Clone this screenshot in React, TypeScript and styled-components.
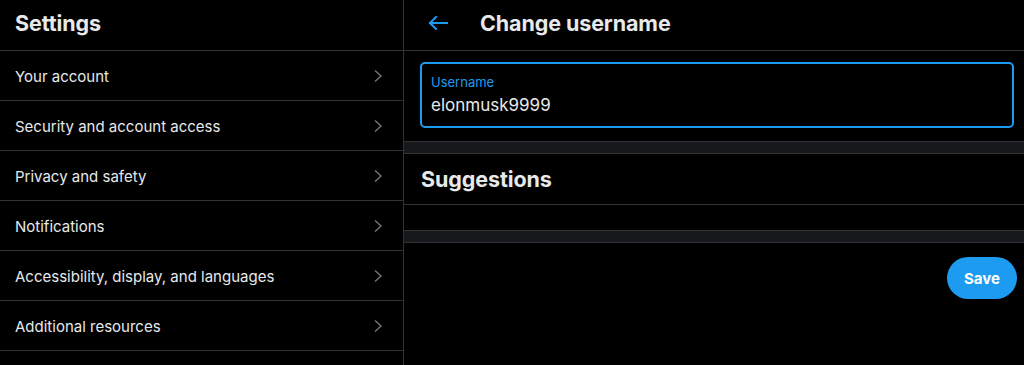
import React from "react";
import styled, { createGlobalStyle } from "styled-components";

const Global = createGlobalStyle`
  html, body { margin: 0; padding: 0; background: #000; }
  body { font-family: Inter, "Noto Sans", "Liberation Sans", sans-serif; color: #e7e9ea; }
  * { box-sizing: border-box; }
`;

const Page = styled.div`
  display: flex;
  width: 1024px;
  height: 365px;
  background: #000;
  overflow: hidden;
`;

const Sidebar = styled.nav`
  width: 404px;
  flex-shrink: 0;
  border-right: 1px solid #2f3336;
  display: flex;
  flex-direction: column;
`;

const Header = styled.div`
  height: 51px;
  border-bottom: 1px solid #2f3336;
  display: flex;
  align-items: center;
  padding: 0 15px;
  padding-bottom: 4px;
`;

const Title = styled.h1`
  margin: 0;
  font-size: 21.5px;
  font-weight: 700;
  color: #e7e9ea;
  letter-spacing: -0.1px;
`;

const Row = styled.div`
  height: 50px;
  border-bottom: 1px solid #2f3336;
  display: flex;
  align-items: center;
  justify-content: space-between;
  padding: 1px 20px 0 15px;
  font-size: 15px;
  color: #e7e9ea;
`;

const Chevron = styled.svg`
  width: 10px;
  height: 14px;
  color: #71767b;
`;

const Main = styled.main`
  flex: 1;
  display: flex;
  flex-direction: column;
`;

const BackHeader = styled(Header)`
  padding-left: 24px;
  gap: 32px;
`;

const BackArrow = styled.svg`
  width: 20px;
  height: 14px;
  color: #1d9bf0;
`;

const Field = styled.div`
  margin: 11px 10px 0 16px;
  height: 66px;
  border: 2px solid #1d9bf0;
  border-radius: 5px;
  padding: 10px 9px 0 9px;
  display: flex;
  flex-direction: column;
`;

const Label = styled.label`
  font-size: 13px;
  color: #1d9bf0;
  line-height: 16px;
`;

const Value = styled.div`
  font-size: 17px;
  line-height: 24px;
  margin-top: 3px;
  color: #e7e9ea;
`;

const Band = styled.div<{ $top: number }>`
  margin-top: ${(p) => p.$top}px;
  height: 13px;
  background: #16181c;
  border-top: 1px solid #2f3336;
  border-bottom: 1px solid #2f3336;
`;

const Section = styled.div`
  height: 51px;
  border-bottom: 1px solid #2f3336;
  display: flex;
  align-items: center;
  padding: 0 17px;
`;

const SectionTitle = styled.h2`
  margin: 0;
  font-size: 21.5px;
  font-weight: 700;
  color: #e7e9ea;
  letter-spacing: -0.1px;
`;

const Actions = styled.div`
  display: flex;
  justify-content: flex-end;
  padding: 14px 7px 0 0;
`;

const SaveButton = styled.button`
  width: 70px;
  height: 42px;
  border: none;
  border-radius: 21px;
  background: #1d9bf0;
  color: #fff;
  font-family: inherit;
  font-size: 15px;
  font-weight: 700;
  cursor: pointer;
`;

const items = [
  "Your account",
  "Security and account access",
  "Privacy and safety",
  "Notifications",
  "Accessibility, display, and languages",
  "Additional resources",
];

export default function App() {
  return (
    <>
      <Global />
      <Page>
        <Sidebar>
          <Header>
            <Title>Settings</Title>
          </Header>
          {items.map((t) => (
            <Row key={t}>
              <span>{t}</span>
              <Chevron viewBox="0 0 10 14" fill="none">
                <polyline points="2,1.5 8,7 2,12.5" stroke="currentColor" strokeWidth="1.4" strokeLinejoin="miter" />
              </Chevron>
            </Row>
          ))}
        </Sidebar>
        <Main>
          <BackHeader>
            <BackArrow viewBox="0 0 20 14" fill="none">
              <path d="M19 7H2M8 1L2 7l6 6" stroke="currentColor" strokeWidth="2" strokeLinecap="square" />
            </BackArrow>
            <Title>Change username</Title>
          </BackHeader>
          <Field>
            <Label>Username</Label>
            <Value>elonmusk9999</Value>
          </Field>
          <Band $top={13} />
          <Section>
            <SectionTitle>Suggestions</SectionTitle>
          </Section>
          <Band $top={25} />
          <Actions>
            <SaveButton>Save</SaveButton>
          </Actions>
        </Main>
      </Page>
    </>
  );
}
